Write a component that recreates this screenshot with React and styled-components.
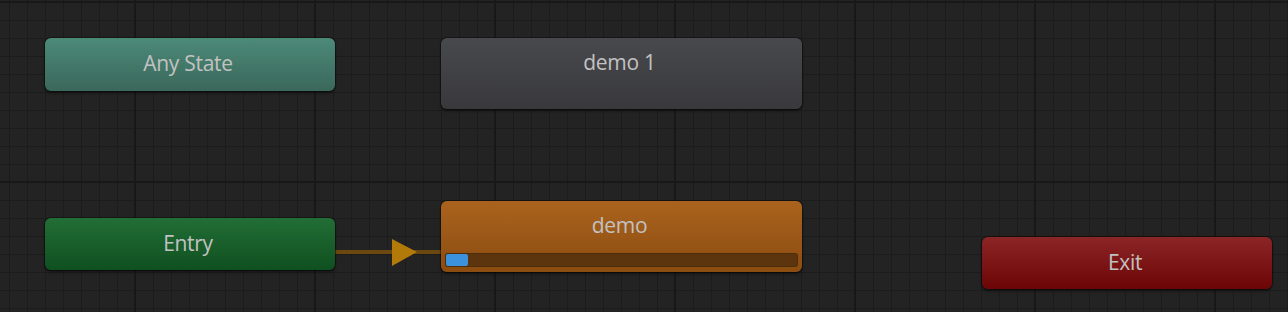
import React from "react";
import styled, { createGlobalStyle } from "styled-components";

const Global = createGlobalStyle`
  html, body { margin: 0; padding: 0; background: #232323; }
  body { font-family: "Open Sans", "Noto Sans", sans-serif; }
`;

const Canvas = styled.div`
  position: relative;
  width: 1288px;
  height: 312px;
  overflow: hidden;
  background-color: #232323;
  background-image:
    linear-gradient(to right, #181818 0 2px, transparent 2px),
    linear-gradient(to bottom, #181818 0 2px, transparent 2px),
    linear-gradient(to right, #1c1c1c 0 1px, transparent 1px),
    linear-gradient(to bottom, #1c1c1c 0 1px, transparent 1px);
  background-size: 180px 180px, 180px 180px, 18px 18px, 18px 18px;
  background-position: 134px 1px, 134px 1px, 9px 2px, 9px 2px;
`;

const palettes = {
  any: ["#4c8a78", "#3a685b"],
  idle: ["#48494d", "#39393c"],
  active: ["#aa631e", "#8b4c10"],
  entry: ["#226e36", "#0f5020"],
  exit: ["#8c2626", "#6c0606"],
};

const Node = styled.div`
  position: absolute;
  left: ${(p) => p.$x}px;
  top: ${(p) => p.$y}px;
  width: ${(p) => p.$w}px;
  height: ${(p) => p.$h}px;
  box-sizing: border-box;
  border-radius: 6px;
  background: linear-gradient(
    to bottom,
    ${(p) => palettes[p.$kind][0]},
    ${(p) => palettes[p.$kind][1]}
  );
  box-shadow: 0 0 0 1px rgba(0, 0, 0, 0.35), 0 2px 3px rgba(0, 0, 0, 0.45);
  display: flex;
  flex-direction: column;
  align-items: center;
  justify-content: ${(p) => (p.$top ? "flex-start" : "center")};
  padding: ${(p) => (p.$top ? "11px 8px 0 4px" : "0 4px 2px 0")};
`;

const Label = styled.span`
  font-size: 21px;
  line-height: 27px;
  color: #c2c2c2;
  letter-spacing: -0.3px;
`;

const Track = styled.div`
  align-self: stretch;
  margin: auto -4px 5px 0;
  height: 14px;
  border-radius: 3px;
  background: #5c350e;
  box-shadow: inset 0 0 0 1px rgba(0, 0, 0, 0.15);
  padding: 1px;
  box-sizing: border-box;
  display: flex;
`;

const Fill = styled.div`
  height: 100%;
  border-radius: 2px;
  background: #3c92dc;
`;

const Transition = styled.svg`
  position: absolute;
  left: 334px;
  top: 236px;
  overflow: visible;
`;

export default function App() {
  return (
    <>
      <Global />
      <Canvas>
        <Transition width="108" height="34" viewBox="0 0 108 34">
          <rect x="0" y="14" width="108" height="4" fill="#6a4810" />
          <polygon points="58,3 83,16 58,30" fill="#b27a08" />
        </Transition>

        <Node $kind="any" $x={45} $y={38} $w={290} $h={53}>
          <Label>Any State</Label>
        </Node>
        <Node $kind="idle" $x={441} $y={38} $w={361} $h={71} $top>
          <Label>demo 1</Label>
        </Node>
        <Node $kind="entry" $x={45} $y={218} $w={290} $h={52}>
          <Label>Entry</Label>
        </Node>
        <Node $kind="active" $x={441} $y={201} $w={361} $h={71} $top>
          <Label>demo</Label>
          <Track>
            <Fill style={{ width: 22 }} />
          </Track>
        </Node>
        <Node $kind="exit" $x={982} $y={237} $w={290} $h={52}>
          <Label>Exit</Label>
        </Node>
      </Canvas>
    </>
  );
}
